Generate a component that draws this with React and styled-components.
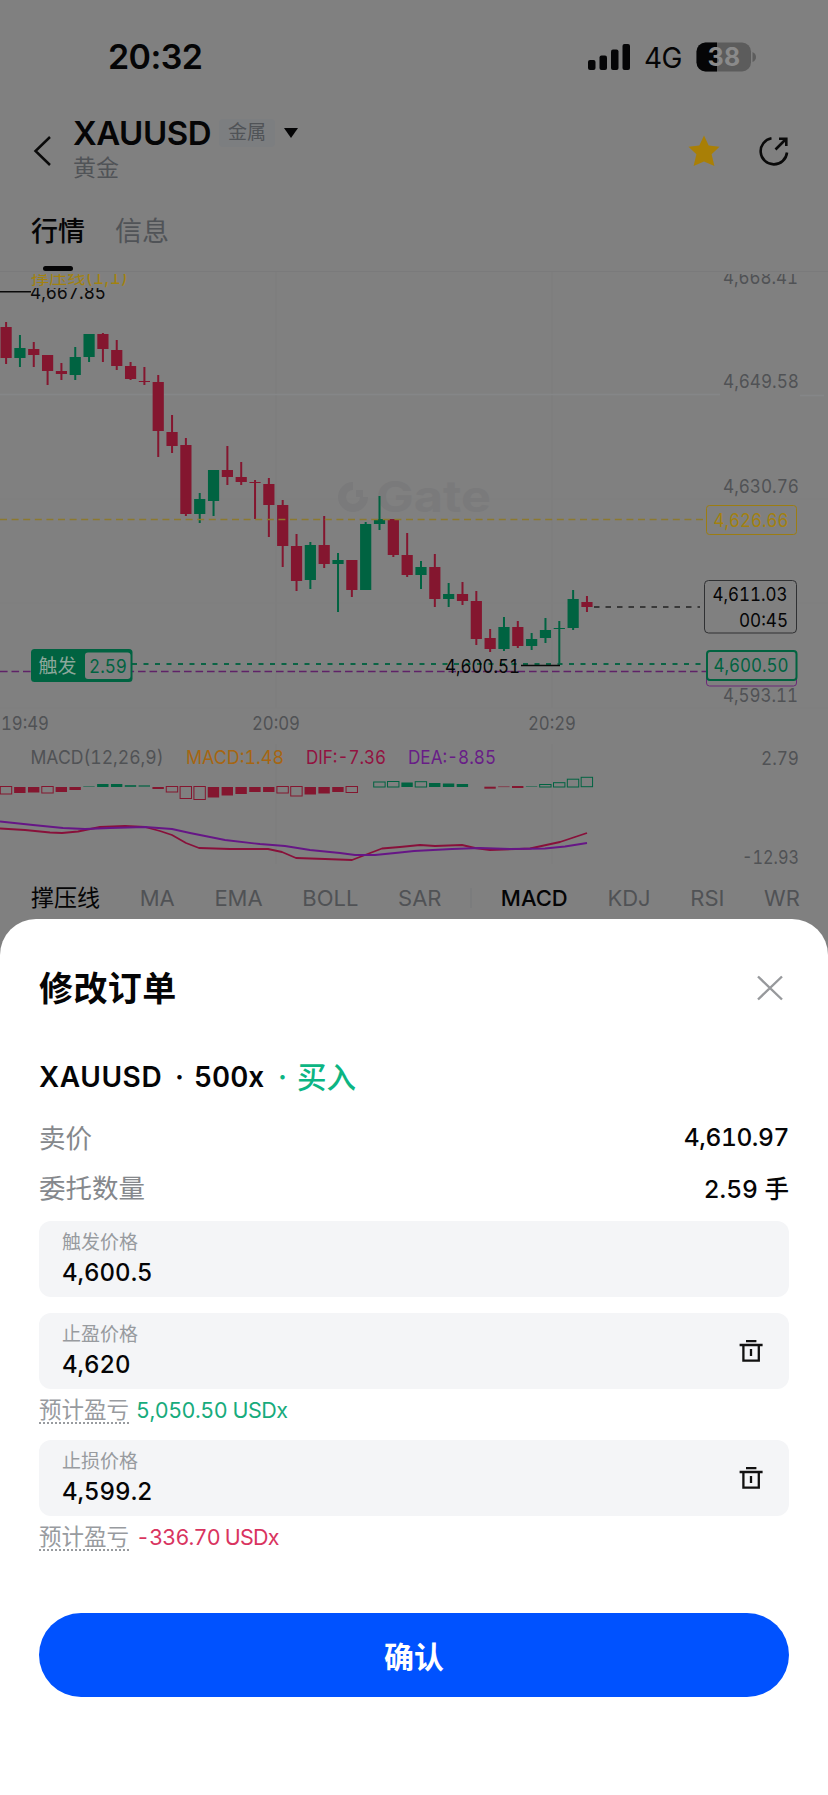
import React from "react";
import styled, { createGlobalStyle } from "styled-components";

const GlobalStyle = createGlobalStyle`
  * {
    box-sizing: border-box;
  }

  body {
    margin: 0;
    background: #808080;
    font-family: Inter, "Noto Sans CJK SC", sans-serif;
    font-feature-settings: "tnum";
  }
`;

// page
const Screen = styled.div`
  width: 828px;
  height: 1795px;
  overflow: hidden;
  display: flex;
  flex-direction: column;
  background: #808080;
  color: #050506;
`;

// status bar
const StatusBar = styled.div`
  height: 112px;
  flex: none;
  display: flex;
  align-items: center;
  justify-content: space-between;
  padding: 1px 72px 0 108px;
`;

const Clock = styled.span`
  font-size: 34px;
  font-weight: 600;
  line-height: 40px;
  letter-spacing: -0.6px;
  font-feature-settings: normal;
`;

const StatusRight = styled.div`
  display: flex;
  align-items: center;
`;

const Network = styled.span`
  margin: 2px 14px 0 13px;
  font-size: 28px;
  line-height: 32px;
  letter-spacing: -0.5px;
  font-feature-settings: normal;
`;

// header
const Header = styled.div`
  height: 92px;
  flex: none;
  display: flex;
  padding: 0 37px 0 33px;
`;

const BackIcon = styled.svg`
  margin: 23px 21px 0 0;
`;

const Names = styled.div`
  flex: 1;
`;

const NameRow = styled.div`
  display: flex;
  align-items: center;
  height: 41px;
`;

const Symbol = styled.span`
  font-size: 33px;
  font-weight: 600;
  line-height: 40px;
  letter-spacing: -0.5px;
`;

const Tag = styled.span`
  width: 56px;
  height: 28px;
  margin: 0 9px 0 8px;
  border-radius: 4px;
  background: #7c7e80;
  color: #505357;
  font-size: 19px;
  line-height: 27px;
  text-align: center;
`;

const SubName = styled.div`
  font-size: 23px;
  line-height: 30px;
  color: #505357;
`;

const HeaderActions = styled.div`
  display: flex;
  gap: 36px;
  padding-top: 22px;
`;

// tabs
const Tabs = styled.div`
  height: 68px;
  flex: none;
  display: flex;
  gap: 30px;
  padding-left: 31px;
  border-bottom: 1px solid #7a7a7b;
`;

const Tab = styled.div`
  display: flex;
  flex-direction: column;
  align-items: center;
  justify-content: space-between;
  padding-top: 9px;
  font-size: 27px;
  line-height: 38px;
  font-weight: ${(props) => (props.$active ? 500 : 400)};
  color: ${(props) => (props.$active ? "#050506" : "#505357")};
`;

const TabLine = styled.div`
  width: 30px;
  height: 5px;
  border-radius: 3px;
  background: #050506;
`;

const ChartSvg = styled.svg`
  display: block;
  flex: none;
`;

// indicator picker under the chart
const Indicators = styled.div`
  height: 43px;
  flex: none;
  display: flex;
  align-items: center;
  justify-content: space-between;
  padding: 0 28px 0 31px;
`;

const Indicator = styled.span`
  font-size: ${(props) => (props.$cjk ? 23 : 22)}px;
  line-height: 30px;
  font-weight: ${(props) => (props.$active && !props.$cjk ? 500 : 400)};
  color: ${(props) => (props.$active ? "#050506" : "#505255")};
`;

const Divider = styled.span`
  width: 2px;
  height: 20px;
  margin: 0 -11px;
  background: #7b7c7d;
`;

// bottom sheet
const Sheet = styled.section`
  flex: 1;
  display: flex;
  flex-direction: column;
  padding: 0 39px;
  border-radius: 36px 36px 0 0;
  background: #fff;
`;

const SheetHead = styled.div`
  display: flex;
  align-items: center;
  justify-content: space-between;
  height: 138px;
  padding-right: 6px;
`;

const SheetTitle = styled.h2`
  margin: 1px 0 0;
  font-size: 34px;
  line-height: 48px;
  font-weight: 600;
  letter-spacing: 0.4px;
`;

const OrderLine = styled.div`
  display: flex;
  align-items: center;
  height: 40px;
  margin-bottom: 15px;
  font-size: 28px;
  font-weight: 600;
`;

const OrderPart = styled.span`
  width: ${(props) => props.$width}px;
  flex: none;
  letter-spacing: ${(props) => props.$spacing || 0}px;
  color: ${(props) => (props.$buy ? "#0cb583" : "#050506")};
`;

const BuySide = styled(OrderPart)`
  margin-top: -4px;
  font-size: 29.5px;
  font-weight: 500;
`;

const InfoRow = styled.div`
  display: flex;
  align-items: center;
  justify-content: space-between;
  height: 50px;
`;

const InfoLabel = styled.span`
  margin-top: -2px;
  font-size: 26.5px;
  color: #85888c;
`;

const InfoValue = styled.span`
  font-size: 24.5px;
  font-weight: 500;
  letter-spacing: ${(props) => props.$spacing || 0}px;
`;

const Field = styled.div`
  display: flex;
  align-items: center;
  justify-content: space-between;
  height: 76px;
  margin-top: ${(props) => props.$top}px;
  padding: 0 26px 0 23px;
  border-radius: 12px;
  background: #f4f5f7;
`;

const FieldLabel = styled.div`
  font-size: 19px;
  line-height: 28px;
  color: #989b9f;
`;

const FieldValue = styled.div`
  font-size: 24px;
  line-height: 32px;
  font-weight: 500;
`;

const Pnl = styled.div`
  display: flex;
  align-items: flex-start;
  gap: 7px;
  height: 51px;
  padding-top: 5px;
`;

const PnlLabel = styled.span`
  height: 30px;
  font-size: 22.5px;
  line-height: 32px;
  color: #989b9f;
  border-bottom: 2px dotted #989b9f;
`;

const PnlValue = styled.span`
  font-size: 21.5px;
  line-height: 32px;
  letter-spacing: ${(props) => (props.$up ? -0.5 : -0.8)}px;
  color: ${(props) => (props.$up ? "#17ab7c" : "#d9345f")};
`;

const ConfirmBtn = styled.button`
  height: 84px;
  margin-top: 46px;
  border: none;
  border-radius: 42px;
  background: #0052ff;
  color: #fff;
  font-family: inherit;
  font-size: 30px;
  font-weight: 600;
`;

const RED = "#84162f";
const GREEN = "#006341";
const MUTED = "#505255";
const STEP = 13.83;
const FIRST_X = 6;

// [up, high, low, bodyTop, bodyBottom]
const candles = [
  [0, 322, 364, 327, 358], [1, 335, 367, 348, 358], [0, 342, 367, 349, 355],
  [0, 355, 385, 355, 371], [0, 363, 380, 371, 374], [1, 347, 380, 357, 375],
  [1, 334, 362, 334, 357], [0, 333, 362, 334, 349], [0, 340, 370, 350, 366],
  [0, 362, 380, 366, 379], [0, 367, 385, 381, 382], [0, 375, 457, 382, 431],
  [0, 415, 453, 432, 446], [0, 438, 516, 445, 514], [1, 493, 523, 499, 514],
  [1, 470, 516, 470, 501], [0, 446, 485, 470, 477], [0, 462, 485, 477, 482],
  [0, 480, 519, 482, 483], [0, 478, 537, 484, 505], [0, 500, 567, 505, 546],
  [0, 534, 591, 546, 581], [1, 542, 589, 545, 580], [0, 516, 568, 545, 564],
  [1, 553, 612, 560, 564], [0, 560, 597, 560, 590], [1, 522, 590, 524, 590],
  [1, 496, 530, 519, 524], [0, 519, 557, 519, 555], [0, 533, 577, 555, 575],
  [1, 561, 589, 567, 575], [0, 554, 607, 567, 599], [1, 583, 607, 594, 599],
  [0, 582, 605, 594, 601], [0, 591, 645, 601, 639], [0, 629, 652, 638, 649],
  [1, 617, 651, 627, 649], [0, 621, 648, 627, 646], [1, 633, 650, 639, 646],
  [1, 618, 643, 630, 638], [1, 621, 665, 628, 629], [1, 590, 630, 599, 628],
  [0, 596, 612, 602, 607],
];

// [index, up, hollow, top, bottom]
const macdBars = [
  [0, 0, 1, 786.5, 794], [1, 0, 0, 787, 793], [2, 0, 0, 787, 792.5],
  [3, 0, 1, 786.5, 793], [4, 0, 0, 787, 792], [5, 0, 0, 787, 790],
  [6, 1, 0, 786, 786.5], [7, 1, 0, 784, 787], [8, 1, 0, 784, 787],
  [9, 1, 0, 785.2, 786.8], [10, 1, 0, 785.4, 786.6], [11, 0, 0, 787, 789],
  [12, 0, 1, 786.5, 792], [13, 0, 1, 786.5, 798.5], [14, 0, 1, 786.5, 799.5],
  [15, 0, 0, 787, 797.5], [16, 0, 0, 787, 795.5], [17, 0, 0, 787, 794],
  [18, 0, 0, 787, 792], [19, 0, 0, 787, 792], [20, 0, 1, 786.5, 793],
  [21, 0, 1, 786.5, 796], [22, 0, 0, 787, 794.5], [23, 0, 0, 787, 793.5],
  [24, 0, 0, 787, 792], [25, 0, 1, 786.5, 792.5], [27, 1, 1, 782, 787],
  [28, 1, 1, 781.5, 787], [29, 1, 0, 782.5, 787], [30, 1, 1, 781.7, 787],
  [31, 1, 0, 783, 787], [32, 1, 0, 783.5, 787], [33, 1, 0, 784, 787],
  [35, 0, 0, 786.7, 788.7], [36, 0, 0, 786.5, 787.1], [37, 0, 0, 786, 788],
  [38, 1, 0, 786, 786.5], [39, 1, 1, 784.5, 787], [40, 1, 1, 782.7, 787],
  [41, 1, 1, 779.2, 787], [42, 1, 1, 777.3, 786.7],
];

const dif =
  "0,828.5 25,830 50,832.5 62,833 78,831.5 100,827 125,826 145,827 160,831 172,835 186,843 199,848 230,849 268,849 282,852 296,858 325,859 352,860 365,855 382,848.5 400,847 420,845 435,846 462,845 475,848 490,850 530,848.5 560,842 575,837 587,833";
const dea =
  "0,821.5 33,825 63,828 85,829 110,828 145,827 172,829 190,833 225,840 260,844 285,846 310,850 340,853 355,855 375,855 400,852.5 414,851 452,849 480,848 510,849 545,848.5 565,846.5 587,843";

const Label = ({ x, y, w, fill = MUTED, size = 19, children }) => (
  <text x={x} y={y} fontSize={size} fill={fill} textLength={w} lengthAdjust="spacingAndGlyphs">
    {children}
  </text>
);

const Chart = () => (
  <ChartSvg width="828" height="604" viewBox="0 272 828 604">
    <defs>
      <clipPath id="legendClip">
        <rect x="0" y="274" width="828" height="20" />
      </clipPath>
      <clipPath id="highClip">
        <rect x="0" y="288" width="828" height="20" />
      </clipPath>
    </defs>

    {/* grid */}
    <g stroke="#7e7e7e" strokeWidth="1.5">
      <path d="M276 272V708M552 272V708M276 744V864M552 744V864" />
      <path d="M0 499H828M0 603H828M0 708H828" stroke="#7f7f7f" />
      <path d="M0 394.5H720M800 395.5H824" stroke="#858688" />
    </g>

    {/* watermark */}
    <g fill="#7a7a7b">
      <path d="M353 482a15 15 0 1 0 15 15h-8a7 7 0 1 1-7-7zM356 490h7v7h-7z" />
      <text x="376" y="512" fontSize="43" fontWeight="700" textLength="115" lengthAdjust="spacingAndGlyphs">
        Gate
      </text>
    </g>

    {candles.map(([up, high, low, top, bottom], i) => {
      const x = FIRST_X + STEP * i;
      return (
        <g key={i} fill={up ? GREEN : RED}>
          <rect x={x - 0.9} y={high} width="2" height={low - high} />
          <rect x={x - 5.5} y={top} width="11.2" height={bottom - top} />
        </g>
      );
    })}

    {/* support, resistance and trigger lines */}
    <g fill="none" strokeWidth="1.3">
      <path d="M0 519.5H706" stroke="#8c792f" strokeDasharray="7 4.6" />
      <path d="M0 671.5H706" stroke="#5f2268" strokeDasharray="7.6 3.9" />
      <path d="M132 664H706" stroke="#0b6445" strokeWidth="1.8" strokeDasharray="5 6.5" />
      <path d="M594 607H700" stroke="#222" strokeDasharray="5.5 6" />
      <path d="M0 291.8H31M521 665.5H560" stroke="#0a0a0a" strokeWidth="1.6" />
    </g>

    <g clipPath="url(#legendClip)">
      <Label x="31" y="284" w="97" fill="#a2820f" size={18.5}>撑压线(1,1)</Label>
      <Label x="723" y="284" w="75">4,668.41</Label>
    </g>
    <g clipPath="url(#highClip)">
      <Label x="30" y="299" w="76" fill="#0a0a0a">4,667.85</Label>
    </g>
    <Label x="445" y="673" w="75" fill="#050506">4,600.51</Label>

    <Label x="723" y="388" w="76">4,649.58</Label>
    <Label x="723" y="492.5" w="76">4,630.76</Label>
    <Label x="723" y="702" w="75">4,593.11</Label>

    {/* price tags */}
    <g fill="#808080">
      <rect x="706.5" y="505.5" width="90" height="29" rx="3" stroke="#9c7d12" />
      <rect x="704.5" y="580.5" width="92" height="52.5" rx="4" stroke="#303133" />
      <rect x="706.5" y="657" width="90" height="29" rx="3" stroke="#6b2878" />
      <rect x="707" y="651" width="89.5" height="29" rx="3" stroke="#00633f" strokeWidth="2" />
    </g>
    <Label x="713.5" y="527" w="75" fill="#a3800f">4,626.66</Label>
    <Label x="712.5" y="601" w="75" fill="#050506">4,611.03</Label>
    <Label x="739" y="627" w="49" fill="#050506">00:45</Label>
    <Label x="713.5" y="672" w="75" fill="#006341">4,600.50</Label>

    {/* order tag */}
    <rect x="31" y="649" width="101.5" height="33" rx="3.5" fill={GREEN} />
    <rect x="85" y="652.5" width="45.5" height="26.5" rx="3" fill="#808080" />
    <Label x="38.5" y="672.5" w="38" fill="#8ca79b">触发</Label>
    <Label x="89" y="672.5" w="38" fill={GREEN}>2.59</Label>

    {/* time axis */}
    <Label x="1" y="729.5" w="48">19:49</Label>
    <Label x="252" y="729.5" w="48">20:09</Label>
    <Label x="528" y="729.5" w="48">20:29</Label>

    {/* macd */}
    <Label x="30.5" y="764" w="133">MACD(12,26,9)</Label>
    <Label x="186" y="764" w="98" fill="#a66612">MACD:1.48</Label>
    <Label x="306" y="764" w="80" fill="#921240">DIF:-7.36</Label>
    <Label x="408" y="764" w="88" fill="#681d87">DEA:-8.85</Label>
    <Label x="761" y="765" w="38">2.79</Label>
    <Label x="742" y="864" w="57">-12.93</Label>

    {macdBars.map(([i, up, hollow, top, bottom]) => {
      const color = up ? GREEN : RED;
      return (
        <rect
          key={i}
          x={FIRST_X + STEP * i - 5.7}
          y={top}
          width="11.4"
          height={bottom - top}
          fill={hollow ? "none" : color}
          stroke={hollow ? color : "none"}
        />
      );
    })}
    <g fill="none" strokeWidth="1.8" strokeLinejoin="round">
      <polyline points={dif} stroke="#88103a" />
      <polyline points={dea} stroke="#661686" />
    </g>
  </ChartSvg>
);

const TrashIcon = () => (
  <svg width="24" height="24" viewBox="0 0 24 24" fill="none" stroke="#111" strokeWidth="2.3">
    <path d="M7 2.2H17.4M.6 6H23.6M4.4 6V21.6H19.8V6M12 10V17" />
  </svg>
);

const App = () => {
  return (
    <>
      <GlobalStyle />
      <Screen>
        <StatusBar>
          <Clock>20:32</Clock>
          <StatusRight>
            <svg width="44" height="28" viewBox="0 0 44 28" fill="#050506">
              <rect x="1" y="17" width="7.5" height="10" rx="2" />
              <rect x="12.5" y="12.5" width="7.5" height="14.5" rx="2" />
              <rect x="24" y="6.5" width="7.5" height="20.5" rx="2" />
              <rect x="35.5" y="1" width="7.5" height="26" rx="2" />
            </svg>
            <Network>4G</Network>
            <svg width="60" height="30" viewBox="0 0 60 30">
              <clipPath id="level">
                <rect x="0" y="0" width="21" height="30" />
              </clipPath>
              <rect x="0.5" y="0.5" width="54.5" height="29" rx="9" fill="#5c5c5c" />
              <rect x="0.5" y="0.5" width="54.5" height="29" rx="9" fill="#050506" clipPath="url(#level)" />
              <path d="M56.5 10q3.5 1.5 3.5 5t-3.5 5z" fill="#5d5d5d" />
              <text x="28" y="24" fontSize="25" fontWeight="700" fill="#8a8a8a" textAnchor="middle">
                38
              </text>
            </svg>
          </StatusRight>
        </StatusBar>

        <Header>
          <BackIcon width="19" height="32" viewBox="0 0 19 32" fill="none" stroke="#0a0a0a" strokeWidth="2.5">
            <path d="M17 2L2.5 16L17 30" />
          </BackIcon>
          <Names>
            <NameRow>
              <Symbol>XAUUSD</Symbol>
              <Tag>金属</Tag>
              <svg width="14" height="10" viewBox="0 0 14 10" fill="#050506">
                <path d="M0 0H14L7 10z" />
              </svg>
            </NameRow>
            <SubName>黄金</SubName>
          </Names>
          <HeaderActions>
            <svg width="34" height="34" viewBox="0 0 34 34" fill="#a97f06">
              <path d="M17 1.5L21.7 11.4L32.5 12.8L24.6 20.3L27.4 32L17 27.4L6.6 32L9.4 20.3L1.5 12.8L12.3 11.4z" />
            </svg>
            <svg width="34" height="34" viewBox="0 0 34 34" fill="none" stroke="#0a0a0a" strokeWidth="2.6">
              <path d="M14.5 4.2A13.2 13.2 0 1 0 30 18.5M18.5 15.5L29 5M22 4.8H29.3V12" />
            </svg>
          </HeaderActions>
        </Header>

        <Tabs>
          <Tab $active>
            行情
            <TabLine />
          </Tab>
          <Tab>信息</Tab>
        </Tabs>

        <Chart />

        <Indicators>
          <Indicator $active $cjk>撑压线</Indicator>
          <Indicator>MA</Indicator>
          <Indicator>EMA</Indicator>
          <Indicator>BOLL</Indicator>
          <Indicator>SAR</Indicator>
          <Divider />
          <Indicator $active>MACD</Indicator>
          <Indicator>KDJ</Indicator>
          <Indicator>RSI</Indicator>
          <Indicator>WR</Indicator>
        </Indicators>

        <Sheet>
          <SheetHead>
            <SheetTitle>修改订单</SheetTitle>
            <svg width="26" height="26" viewBox="0 0 26 26" fill="none" stroke="#97999c" strokeWidth="2.4">
              <path d="M1 1.5L25 24.5M25 1.5L1 24.5" />
            </svg>
          </SheetHead>

          <OrderLine>
            <OrderPart $width={136} $spacing={0.6}>XAUUSD</OrderPart>
            <OrderPart $width={19}>·</OrderPart>
            <OrderPart $width={84}>500x</OrderPart>
            <OrderPart $width={19} $buy>·</OrderPart>
            <BuySide $width={62} $buy>买入</BuySide>
          </OrderLine>

          <InfoRow>
            <InfoLabel>卖价</InfoLabel>
            <InfoValue $spacing={-0.4}>4,610.97</InfoValue>
          </InfoRow>
          <InfoRow>
            <InfoLabel>委托数量</InfoLabel>
            <InfoValue>2.59 手</InfoValue>
          </InfoRow>

          <Field $top={9}>
            <div>
              <FieldLabel>触发价格</FieldLabel>
              <FieldValue>4,600.5</FieldValue>
            </div>
          </Field>
          <Field $top={16}>
            <div>
              <FieldLabel>止盈价格</FieldLabel>
              <FieldValue>4,620</FieldValue>
            </div>
            <TrashIcon />
          </Field>
          <Pnl>
            <PnlLabel>预计盈亏</PnlLabel>
            <PnlValue $up>5,050.50 USDx</PnlValue>
          </Pnl>
          <Field $top={0}>
            <div>
              <FieldLabel>止损价格</FieldLabel>
              <FieldValue>4,599.2</FieldValue>
            </div>
            <TrashIcon />
          </Field>
          <Pnl>
            <PnlLabel>预计盈亏</PnlLabel>
            <PnlValue>-336.70 USDx</PnlValue>
          </Pnl>

          <ConfirmBtn>确认</ConfirmBtn>
        </Sheet>
      </Screen>
    </>
  );
};

export default App;
